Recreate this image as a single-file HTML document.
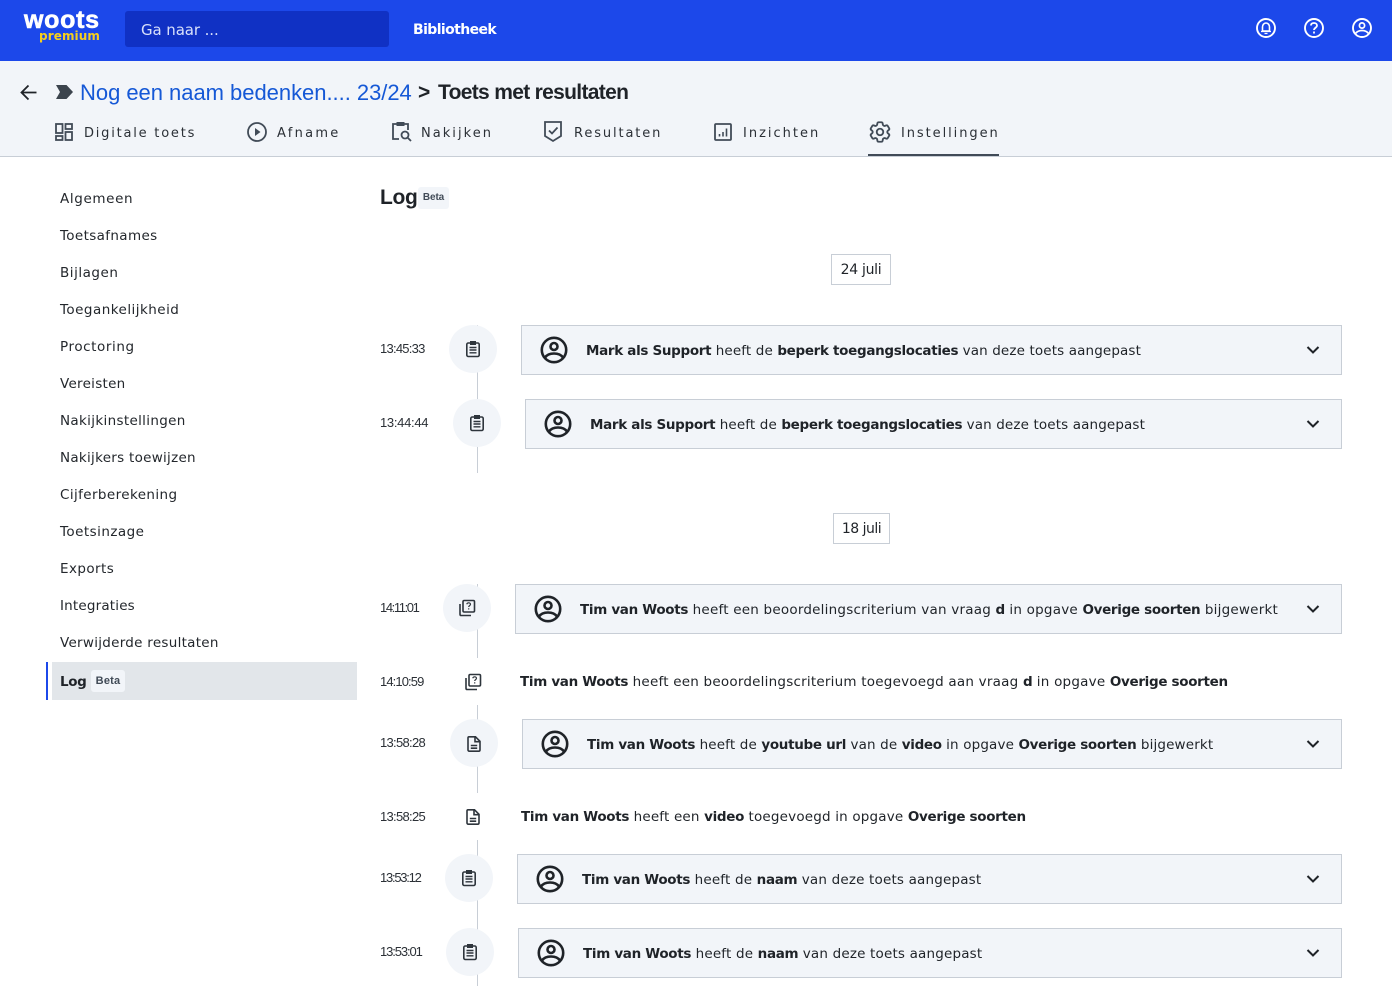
<!DOCTYPE html>
<html lang="nl"><head><meta charset="utf-8"><title>Log</title>
<style>
*{box-sizing:border-box}
html,body{margin:0;padding:0;background:#fff}
body{width:1392px;height:986px;position:relative;overflow:hidden;font-family:"DejaVu Sans","Liberation Sans",sans-serif;color:#1f2328}
.a{position:absolute;white-space:nowrap}
svg{position:absolute;overflow:visible}
.s{font-family:"DejaVu Sans",sans-serif;font-size:13.5px;line-height:20px;left:60px;letter-spacing:.28px;color:#23272c}
.t{font-family:"DejaVu Sans",sans-serif;font-size:13px;line-height:18px;letter-spacing:1.78px;color:#2b3036}
.time{font-family:"Liberation Sans",sans-serif;font-size:13px;line-height:16px;left:380px;letter-spacing:-.5px;color:#2b3036}
.c{position:absolute;width:48px;height:48px;border-radius:50%;background:#f2f5f9}
.card{position:absolute;height:50px;right:50px;background:#f2f5f9;border:1px solid #c8ced6}
.m{font-family:"DejaVu Sans",sans-serif;font-size:13.5px;line-height:20px;letter-spacing:.15px;color:#1f2328}
.m b{font-weight:700;letter-spacing:-.32px}
.l{position:absolute;left:477px;width:1px;background:#c8ced6}
.date{position:absolute;border:1px solid #c8ced6;background:#fff;font-size:14px;letter-spacing:-.3px;text-align:center;line-height:31px;height:31px;color:#1f2328}
</style></head><body>
<svg width="0" height="0" style="position:absolute">
<defs>
<symbol id="ava" viewBox="0 0 28 28"><g fill="none" stroke="#1f2328" stroke-width="2.6"><circle cx="14" cy="14" r="12.2"/><circle cx="14" cy="10.5" r="3.5"/><path d="M5 21.5c2-3 5.500-4 9-4s7 1 9 4"/></g></symbol>
<symbol id="clip" viewBox="0 0 18 18"><g fill="none" stroke="#2e353c" stroke-width="1.6"><rect x="2.800" y="3" width="12.400" height="13.500" rx="1.500"/><rect x="6.500" y="1.500" width="5" height="3" fill="#2e353c" stroke-width="1"/><path d="M5.500 7.500h7M5.500 10h7M5.500 12.800h7" stroke-width="1.400"/></g></symbol>
<symbol id="q" viewBox="0 0 18 18"><g fill="none" stroke="#2e353c" stroke-width="1.600"><rect x="5" y="1.500" width="11.500" height="11.500" rx="1.200"/><path d="M2 5v10.200c0 .7.500 1.300 1.300 1.300H13"/><path d="M8.800 5.200c.2-1 1-1.400 1.900-1.400s1.800.6 1.800 1.500c0 1.300-1.800 1.300-1.800 2.700M10.700 9.200v1.300" stroke-width="1.200"/></g></symbol>
<symbol id="doc" viewBox="0 0 18 18"><g fill="none" stroke="#2e353c" stroke-width="1.600"><path d="M4 1.800h6.500L15 6.300v8.600c0 .8-.6 1.300-1.300 1.300H4.300c-.8 0-1.300-.5-1.300-1.300V3c0-.7.400-1.200 1-1.200z"/><path d="M10 2v4.700h4.800"/><path d="M5.800 10.500h6.400M5.800 13.200h6.400"/></g></symbol>
<symbol id="chev" viewBox="0 0 14 10"><path d="M1.500 2l5.500 5.500L12.500 2" fill="none" stroke="#1f2328" stroke-width="2"/></symbol>
</defs></svg>

<!-- top bar -->
<div class="a" style="left:0;top:0;width:1392px;height:61px;background:#1c48ea"></div>
<div class="a" style="left:24px;top:5px;font:700 25px/30px 'Liberation Sans',sans-serif;color:#fff;letter-spacing:.7px;-webkit-text-stroke:.6px #fff">woots</div>
<div class="a" style="left:39px;top:28px;font:700 12px/16px 'DejaVu Sans',sans-serif;color:#f7cf1d;letter-spacing:.1px">premium</div>
<div class="a" style="left:125px;top:11px;width:264px;height:36px;background:#1031c4;border-radius:3px"></div>
<div class="a" style="left:141px;top:20px;font-size:15px;line-height:20px;color:#d9e1fb;letter-spacing:-.1px">Ga naar ...</div>
<div class="a" style="left:413px;top:20px;font:700 14px/20px 'DejaVu Sans',sans-serif;color:#fff;letter-spacing:-.6px">Bibliotheek</div>
<svg style="left:1256px;top:18px" width="20" height="20" viewBox="0 0 20 20" fill="none" stroke="#fff" stroke-width="1.900"><circle cx="10" cy="10" r="9"/><path d="M6.500 13V9c0-2.200 1.500-4 3.500-4s3.500 1.800 3.500 4v4z" stroke-width="1.600"/><path d="M5 13.500h10M8.500 15.500h3" stroke-width="1.300"/></svg>
<svg style="left:1304px;top:18px" width="20" height="20" viewBox="0 0 20 20" fill="none" stroke="#fff" stroke-width="1.900"><circle cx="10" cy="10" r="9"/><path d="M7 7.500C7 5.800 8.300 5 10 5s3 1 3 2.500c0 2.200-3 2.300-3 4.500M10 13.500v2" stroke-width="1.800"/></svg>
<svg style="left:1352px;top:18px" width="20" height="20" viewBox="0 0 20 20" fill="none" stroke="#fff" stroke-width="1.900"><circle cx="10" cy="10" r="9"/><circle cx="10" cy="7.500" r="2.600" stroke-width="1.700"/><path d="M3.500 15.500c1.500-2 4-3 6.500-3s5 1 6.500 3" stroke-width="1.700"/></svg>

<!-- sub header -->
<div class="a" style="left:0;top:61px;width:1392px;height:96px;background:#f2f5f9;border-bottom:1px solid #c8ced6"></div>
<svg style="left:20px;top:84px" width="17" height="17" viewBox="0 0 17 17" fill="none" stroke="#1f2328" stroke-width="1.800"><path d="M16.500 8.500H1.500M8.500 1.500l-7 7 7 7"/></svg>
<svg style="left:56px;top:85px" width="17" height="14" viewBox="0 0 17 14"><path d="M0 0h10.500L17 7l-6.500 7H0l4-7z" fill="#3c444d"/></svg>
<div class="a" style="left:80px;top:78px;font:400 22px/29px 'Liberation Sans',sans-serif;color:#1558d6;letter-spacing:-.03px">Nog een naam bedenken.... 23/24</div>
<div class="a" style="left:418px;top:78px;font:700 21px/29px 'Liberation Sans',sans-serif;color:#1f2328">&gt;</div>
<div class="a" style="left:438px;top:78px;font:700 21px/29px 'Liberation Sans',sans-serif;color:#1f2328;letter-spacing:-.68px">Toets met resultaten</div>

<!-- tabs -->
<svg style="left:55px;top:123px" width="18" height="18" viewBox="0 0 18 18" fill="none" stroke="#414b57" stroke-width="1.800"><rect x="1" y="1" width="6.500" height="9"/><rect x="10.500" y="1" width="6.500" height="5"/><rect x="1" y="13" width="6.500" height="4"/><rect x="10.500" y="9" width="6.500" height="8"/></svg>
<div class="a t" style="left:84px;top:125px">Digitale toets</div>
<svg style="left:247px;top:122px" width="20" height="20" viewBox="0 0 20 20"><circle cx="10" cy="10" r="9" fill="none" stroke="#414b57" stroke-width="1.800"/><path d="M8 6l5.500 4L8 14z" fill="#414b57"/></svg>
<div class="a t" style="left:277px;top:125px;letter-spacing:2.28px">Afname</div>
<svg style="left:391px;top:121px" width="21" height="21" viewBox="0 0 21 21" fill="none" stroke="#414b57" stroke-width="1.800"><path d="M6 3H2v15h6M13 3h4v6"/><rect x="6" y="1.500" width="7" height="3" fill="#414b57" stroke-width="1"/><circle cx="14" cy="14" r="3.500"/><path d="M16.500 16.500l3.500 3.500"/></svg>
<div class="a t" style="left:421px;top:125px;letter-spacing:2.03px">Nakijken</div>
<svg style="left:544px;top:121px" width="18" height="21" viewBox="0 0 18 21" fill="none" stroke="#414b57" stroke-width="1.800"><path d="M1 1h16v14l-8 5-8-5z"/><path d="M5 9.500l3 3 5.500-6"/></svg>
<div class="a t" style="left:574px;top:125px;letter-spacing:1.88px">Resultaten</div>
<svg style="left:714px;top:123px" width="18" height="18" viewBox="0 0 18 18" fill="none" stroke="#414b57" stroke-width="1.800"><rect x="1" y="1" width="16" height="16" rx="1"/><path d="M5.500 11v2.500M9 9v4.500M12.500 5.500v8" stroke-width="1.600"/></svg>
<div class="a t" style="left:743px;top:125px;letter-spacing:2px">Inzichten</div>
<svg style="left:867px;top:119px" width="26" height="26" viewBox="0 0 24 24" fill="none" stroke="#414b57" stroke-width="1.700"><path d="M9.594 3.940c.09-.542.56-.94 1.110-.94h2.593c.55 0 1.020.398 1.110.94l.213 1.281c.063.374.313.686.645.870.074.040.147.083.22.127.324.196.72.257 1.075.124l1.217-.456a1.125 1.125 0 011.370.490l1.296 2.247a1.125 1.125 0 01-.26 1.431l-1.003.827c-.293.24-.438.613-.431.992a6.759 6.759 0 010 .255c-.007.378.138.75.43.99l1.005.828c.424.35.534.954.26 1.430l-1.298 2.247a1.125 1.125 0 01-1.369.491l-1.217-.456c-.355-.133-.75-.072-1.076.124a6.570 6.570 0 01-.22.128c-.331.183-.581.495-.644.869l-.213 1.280c-.09.543-.56.941-1.110.941h-2.594c-.55 0-1.020-.398-1.110-.94l-.213-1.281c-.062-.374-.312-.686-.644-.870a6.520 6.520 0 01-.22-.127c-.325-.196-.72-.257-1.076-.124l-1.217.456a1.125 1.125 0 01-1.369-.49l-1.297-2.247a1.125 1.125 0 01.26-1.431l1.004-.827c.292-.24.437-.613.43-.992a6.932 6.932 0 010-.255c.007-.378-.138-.75-.43-.99l-1.004-.828a1.125 1.125 0 01-.26-1.430l1.297-2.247a1.125 1.125 0 011.370-.491l1.216.456c.356.133.751.072 1.076-.124.072-.044.146-.087.22-.128.332-.183.582-.495.644-.869l.214-1.281z"/><circle cx="12" cy="12" r="3"/></svg>
<div class="a t" style="left:901px;top:125px;letter-spacing:1.93px">Instellingen</div>
<div class="a" style="left:868px;top:154px;width:131px;height:2px;background:#414b57"></div>

<!-- sidebar -->
<div class="a s" style="top:189px;letter-spacing:.63px">Algemeen</div>
<div class="a s" style="top:226px;letter-spacing:.36px">Toetsafnames</div>
<div class="a s" style="top:263px;letter-spacing:.53px">Bijlagen</div>
<div class="a s" style="top:300px;letter-spacing:.47px">Toegankelijkheid</div>
<div class="a s" style="top:337px;letter-spacing:.58px">Proctoring</div>
<div class="a s" style="top:374px">Vereisten</div>
<div class="a s" style="top:411px;letter-spacing:.33px">Nakijkinstellingen</div>
<div class="a s" style="top:448px">Nakijkers toewijzen</div>
<div class="a s" style="top:485px;letter-spacing:.4px">Cijferberekening</div>
<div class="a s" style="top:522px;letter-spacing:.46px">Toetsinzage</div>
<div class="a s" style="top:559px;letter-spacing:.42px">Exports</div>
<div class="a s" style="top:596px;letter-spacing:.18px">Integraties</div>
<div class="a s" style="top:633px">Verwijderde resultaten</div>
<div class="a" style="left:46px;top:662px;width:2px;height:38px;background:#1c48ea"></div>
<div class="a" style="left:52px;top:662px;width:305px;height:38px;background:#e2e6ea"></div>
<div class="a" style="left:60px;top:672px;font:700 13.500px/20px 'DejaVu Sans',sans-serif;letter-spacing:-.4px">Log</div>
<div class="a" style="left:91px;top:670px;width:34px;height:22px;background:#f2f5f9;border-radius:3px;font:700 11px/23px 'Liberation Sans',sans-serif;color:#414b57;text-align:center;letter-spacing:.2px">Beta</div>

<!-- heading -->
<div class="a" style="left:380px;top:184px;font:700 21px/28px 'Liberation Sans',sans-serif;color:#1f2328;letter-spacing:-.3px">Log</div>
<div class="a" style="left:418px;top:187px;width:31px;height:22px;background:#f2f5f9;border-radius:3px;font:700 10px/22px 'Liberation Sans',sans-serif;color:#414b57;text-align:center;letter-spacing:-.1px">Beta</div>

<!-- dates -->
<div class="date" style="left:831px;top:254px;width:60px">24 juli</div>
<div class="date" style="left:833px;top:513px;width:57px;letter-spacing:-.5px">18 juli</div>

<!-- timeline lines -->
<div class="l" style="top:325px;height:148px"></div>
<div class="l" style="top:584px;height:74px"></div>
<div class="l" style="top:705px;height:88px"></div>
<div class="l" style="top:840px;height:146px"></div>

<!-- row 1 -->
<div class="a time" style="top:341px;letter-spacing:-.75px">13:45:33</div>
<div class="c" style="left:449px;top:325px"></div>
<svg style="left:464px;top:340px" width="18" height="18"><use href="#clip"/></svg>
<div class="card" style="left:521px;top:325px"></div>
<svg style="left:540px;top:336px" width="28" height="28"><use href="#ava"/></svg>
<div class="a m" style="left:586px;top:341px;letter-spacing:.13px"><b>Mark als Support</b> heeft de <b>beperk toegangslocaties</b> van deze toets aangepast</div>
<svg style="left:1306px;top:345px" width="14" height="10"><use href="#chev"/></svg>

<!-- row 2 -->
<div class="a time" style="top:415px;letter-spacing:-.3px">13:44:44</div>
<div class="c" style="left:453px;top:399px"></div>
<svg style="left:468px;top:414px" width="18" height="18"><use href="#clip"/></svg>
<div class="card" style="left:525px;top:399px"></div>
<svg style="left:544px;top:410px" width="28" height="28"><use href="#ava"/></svg>
<div class="a m" style="left:590px;top:415px;letter-spacing:.13px"><b>Mark als Support</b> heeft de <b>beperk toegangslocaties</b> van deze toets aangepast</div>
<svg style="left:1306px;top:419px" width="14" height="10"><use href="#chev"/></svg>

<!-- row 3 -->
<div class="a time" style="top:600px;letter-spacing:-1.4px">14:11:01</div>
<div class="c" style="left:443px;top:584px"></div>
<svg style="left:458px;top:599px" width="18" height="18"><use href="#q"/></svg>
<div class="card" style="left:515px;top:584px"></div>
<svg style="left:534px;top:595px" width="28" height="28"><use href="#ava"/></svg>
<div class="a m" style="left:580px;top:600px;letter-spacing:.22px"><b>Tim van Woots</b> heeft een beoordelingscriterium van vraag <b>d</b> in opgave <b>Overige soorten</b> bijgewerkt</div>
<svg style="left:1306px;top:604px" width="14" height="10"><use href="#chev"/></svg>

<!-- row 4 -->
<div class="a time" style="top:674px;letter-spacing:-.9px">14:10:59</div>
<svg style="left:464px;top:673px" width="18" height="18"><use href="#q"/></svg>
<div class="a m" style="left:520px;top:672px;letter-spacing:.22px"><b>Tim van Woots</b> heeft een beoordelingscriterium toegevoegd aan vraag <b>d</b> in opgave <b>Overige soorten</b></div>

<!-- row 5 -->
<div class="a time" style="top:735px;letter-spacing:-.7px">13:58:28</div>
<div class="c" style="left:450px;top:719px"></div>
<svg style="left:465px;top:735px" width="18" height="18"><use href="#doc"/></svg>
<div class="card" style="left:522px;top:719px"></div>
<svg style="left:541px;top:730px" width="28" height="28"><use href="#ava"/></svg>
<div class="a m" style="left:587px;top:735px"><b>Tim van Woots</b> heeft de <b>youtube url</b> van de <b>video</b> in opgave <b>Overige soorten</b> bijgewerkt</div>
<svg style="left:1306px;top:739px" width="14" height="10"><use href="#chev"/></svg>

<!-- row 6 -->
<div class="a time" style="top:809px;letter-spacing:-.7px">13:58:25</div>
<svg style="left:464px;top:808px" width="18" height="18"><use href="#doc"/></svg>
<div class="a m" style="left:521px;top:807px;letter-spacing:.18px"><b>Tim van Woots</b> heeft een <b>video</b> toegevoegd in opgave <b>Overige soorten</b></div>

<!-- row 7 -->
<div class="a time" style="top:870px;letter-spacing:-1.25px">13:53:12</div>
<div class="c" style="left:445px;top:854px"></div>
<svg style="left:460px;top:869px" width="18" height="18"><use href="#clip"/></svg>
<div class="card" style="left:517px;top:854px"></div>
<svg style="left:536px;top:865px" width="28" height="28"><use href="#ava"/></svg>
<div class="a m" style="left:582px;top:870px;letter-spacing:.18px"><b>Tim van Woots</b> heeft de <b>naam</b> van deze toets aangepast</div>
<svg style="left:1306px;top:874px" width="14" height="10"><use href="#chev"/></svg>

<!-- row 8 -->
<div class="a time" style="top:944px;letter-spacing:-1.1px">13:53:01</div>
<div class="c" style="left:446px;top:928px"></div>
<svg style="left:461px;top:943px" width="18" height="18"><use href="#clip"/></svg>
<div class="card" style="left:518px;top:928px"></div>
<svg style="left:537px;top:939px" width="28" height="28"><use href="#ava"/></svg>
<div class="a m" style="left:583px;top:944px;letter-spacing:.18px"><b>Tim van Woots</b> heeft de <b>naam</b> van deze toets aangepast</div>
<svg style="left:1306px;top:948px" width="14" height="10"><use href="#chev"/></svg>
</body></html>
